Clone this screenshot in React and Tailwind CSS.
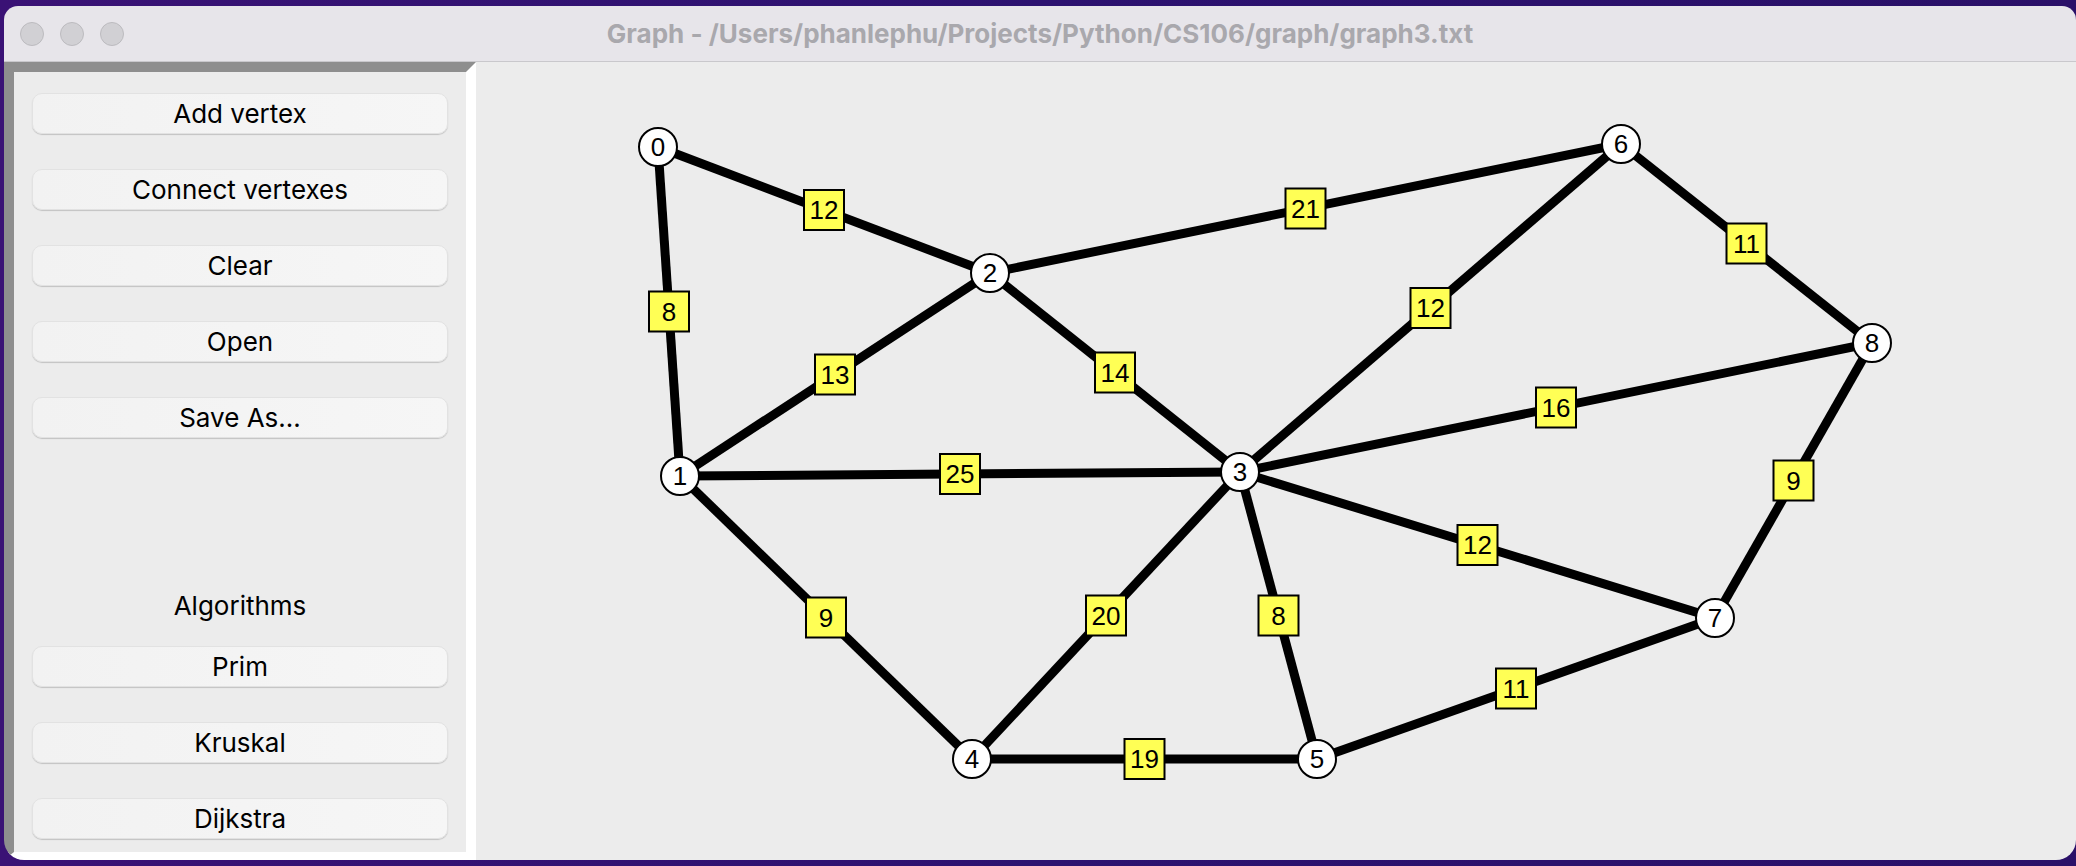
// App.jsx
const nodes = [
  { id: 0, x: 658, y: 147 },
  { id: 1, x: 680, y: 476 },
  { id: 2, x: 990, y: 273 },
  { id: 3, x: 1240, y: 472 },
  { id: 4, x: 972, y: 759 },
  { id: 5, x: 1317, y: 759 },
  { id: 6, x: 1621, y: 144 },
  { id: 7, x: 1715, y: 618 },
  { id: 8, x: 1872, y: 343 },
];

const edges = [
  [0, 1, 8],
  [0, 2, 12],
  [1, 2, 13],
  [1, 3, 25],
  [1, 4, 9],
  [2, 6, 21],
  [2, 3, 14],
  [3, 6, 12],
  [3, 8, 16],
  [3, 7, 12],
  [3, 4, 20],
  [3, 5, 8],
  [4, 5, 19],
  [5, 7, 11],
  [6, 8, 11],
  [7, 8, 9],
];

const topButtons = ["Add vertex", "Connect vertexes", "Clear", "Open", "Save As..."];
const algoButtons = ["Prim", "Kruskal", "Dijkstra"];

function PanelButton({ label }) {
  return (
    <button className="flex h-[41px] w-full items-center justify-center rounded-[10px] border border-[#e2e2e2] bg-gradient-to-r from-[#f2f2f2] to-[#f6f6f6] text-[26px] text-black shadow-[0_1px_1px_rgba(0,0,0,0.18)] [font-family:Inter,'Liberation_Sans',sans-serif]">
      {label}
    </button>
  );
}

function GraphCanvas() {
  const at = (id) => nodes.find((n) => n.id === id);
  return (
    <svg width="1600" height="798" viewBox="476 62 1600 798" className="block">
      {edges.map(([a, b], i) => {
        const p = at(a);
        const q = at(b);
        return (
          <line key={"e" + i} x1={p.x} y1={p.y} x2={q.x} y2={q.y} stroke="#000" strokeWidth="9" />
        );
      })}
      {edges.map(([a, b, w], i) => {
        const p = at(a);
        const q = at(b);
        const mx = (p.x + q.x) / 2;
        const my = (p.y + q.y) / 2;
        return (
          <g key={"w" + i}>
            <rect x={mx - 20} y={my - 20} width="40" height="40" fill="#ffff55" stroke="#000" strokeWidth="2" />
            <text
              x={mx}
              y={my + 9}
              textAnchor="middle"
              fontSize="26"
              fontFamily="'Liberation Sans', Arial, sans-serif"
              fill="#000"
            >
              {w}
            </text>
          </g>
        );
      })}
      {nodes.map((n) => (
        <g key={"n" + n.id}>
          <circle cx={n.x} cy={n.y} r="19" fill="#fff" stroke="#000" strokeWidth="2" />
          <text
            x={n.x}
            y={n.y + 9}
            textAnchor="middle"
            fontSize="26"
            fontFamily="'Liberation Sans', Arial, sans-serif"
            fill="#000"
          >
            {n.id}
          </text>
        </g>
      ))}
    </svg>
  );
}

export default function App() {
  return (
    <div className="h-[866px] w-[2076px] overflow-hidden bg-gradient-to-r from-[#3a1275] via-[#2c1270] to-[#2a1068] pb-[6px] pl-[4px] pt-[6px]">
      <div className="flex h-[854px] w-[2072px] flex-col overflow-hidden rounded-[14px] rounded-b-[20px]">
        {/* title bar */}
        <div className="grid h-[56px] grid-cols-[1fr_auto_1fr] items-center border-b border-[#c9c8cc] bg-[#e7e5ea]">
          <div className="flex items-center gap-[16px] pl-[16px]">
            <span className="h-[24px] w-[24px] rounded-full border border-[#bcbbbf] bg-[#d1d0d4]" />
            <span className="h-[24px] w-[24px] rounded-full border border-[#bcbbbf] bg-[#d1d0d4]" />
            <span className="h-[24px] w-[24px] rounded-full border border-[#bcbbbf] bg-[#d1d0d4]" />
          </div>
          <div className="text-[26px] font-bold text-[#a9a8ad] [font-family:Inter,'Liberation_Sans',sans-serif]">
            Graph - /Users/phanlephu/Projects/Python/CS106/graph/graph3.txt
          </div>
          <div />
        </div>

        <div className="flex h-[798px]">
          {/* side panel */}
          <div className="h-full w-[472px] border-b-[8px] border-l-[10px] border-r-[10px] border-t-[10px] border-b-white border-l-[#8e8e8e] border-r-white border-t-[#8e8e8e]">
            <div className="flex h-full flex-col bg-[#ececec] px-[18px] pt-[21px]">
              <div className="flex flex-col gap-[35px]">
                {topButtons.map((b) => (
                  <PanelButton key={b} label={b} />
                ))}
              </div>
              <div className="mb-[20px] mt-[147px] flex h-[41px] items-center justify-center text-[26px] text-black [font-family:Inter,'Liberation_Sans',sans-serif]">
                Algorithms
              </div>
              <div className="flex flex-col gap-[35px]">
                {algoButtons.map((b) => (
                  <PanelButton key={b} label={b} />
                ))}
              </div>
            </div>
          </div>

          {/* canvas */}
          <div className="flex-1 bg-[#ececec]">
            <GraphCanvas />
          </div>
        </div>
      </div>
    </div>
  );
}
